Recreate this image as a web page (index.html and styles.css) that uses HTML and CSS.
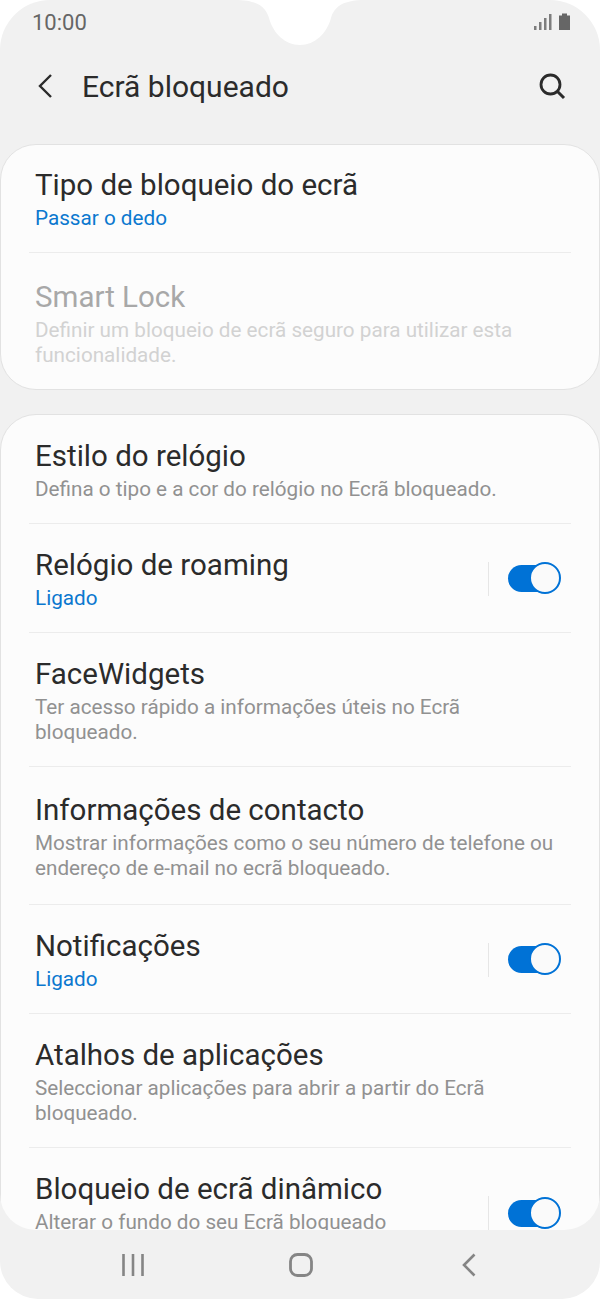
FILE: index.html
```html
<!DOCTYPE html>
<html>
  <head>
    <title>Ecrã bloqueado</title>
    <link rel="stylesheet" href="styles.css">
  </head>
  <body>
    <div class="phone">
      <svg class="notch" width="130" height="46" viewBox="0 0 130 46">
        <path d="M0 0C24 0 31 8 34 18C38 33 50 45 65 45C80 45 92 33 96 18C99 8 106 0 130 0Z" fill="#fff"/>
      </svg>

      <div class="status">
        <span class="clock">10:00</span>
        <svg width="36" height="22" viewBox="0 0 36 22">
          <g fill="#7d7d7d">
            <rect x="0" y="15" width="2.5" height="4"/>
            <rect x="5" y="11" width="2.5" height="8"/>
            <rect x="10" y="7" width="2.5" height="12"/>
            <rect x="15" y="3" width="2.5" height="16"/>
          </g>
          <path d="M25 4.500h3V2.500h5v2h3V19H25Z" fill="#666"/>
        </svg>
      </div>

      <div class="appbar">
        <svg class="back" width="18" height="26" viewBox="0 0 18 26">
          <path d="M15 2L4 13L15 24" fill="none" stroke="#2b2b2b" stroke-width="2.400"/>
        </svg>
        <h1>Ecrã bloqueado</h1>
        <svg class="search" width="28" height="28" viewBox="0 0 28 28">
          <circle cx="12.500" cy="12.500" r="9.500" fill="none" stroke="#2b2b2b" stroke-width="2.800"/>
          <path d="M19.500 19.500L26 26" stroke="#2b2b2b" stroke-width="3"/>
        </svg>
      </div>

      <div class="scroll">
        <div class="card">
          <div class="row first">
            <div class="title">Tipo de bloqueio do ecrã</div>
            <div class="sub blue">Passar o dedo</div>
          </div>
          <div class="row off">
            <div class="title">Smart Lock</div>
            <div class="sub">Definir um bloqueio de ecrã seguro para utilizar esta funcionalidade.</div>
          </div>
        </div>

        <div class="card">
          <div class="row">
            <div class="title">Estilo do relógio</div>
            <div class="sub">Defina o tipo e a cor do relógio no Ecrã bloqueado.</div>
          </div>
          <div class="row has-toggle">
            <div class="text">
              <div class="title">Relógio de roaming</div>
              <div class="sub blue">Ligado</div>
            </div>
            <div class="toggle"><span></span></div>
          </div>
          <div class="row">
            <div class="title">FaceWidgets</div>
            <div class="sub">Ter acesso rápido a informações úteis no Ecrã bloqueado.</div>
          </div>
          <div class="row tall">
            <div class="title">Informações de contacto</div>
            <div class="sub">Mostrar informações como o seu número de telefone ou endereço de e-mail no ecrã bloqueado.</div>
          </div>
          <div class="row has-toggle">
            <div class="text">
              <div class="title">Notificações</div>
              <div class="sub blue">Ligado</div>
            </div>
            <div class="toggle"><span></span></div>
          </div>
          <div class="row">
            <div class="title">Atalhos de aplicações</div>
            <div class="sub">Seleccionar aplicações para abrir a partir do Ecrã bloqueado.</div>
          </div>
          <div class="row has-toggle cut">
            <div class="text">
              <div class="title">Bloqueio de ecrã dinâmico</div>
              <div class="sub">Alterar o fundo do seu Ecrã bloqueado</div>
            </div>
            <div class="toggle"><span></span></div>
          </div>
        </div>
      </div>

      <div class="nav">
        <svg width="24" height="22" viewBox="0 0 24 22">
          <path d="M2.500 0V22M12 0V22M21.500 0V22" stroke="#858585" stroke-width="2.600"/>
        </svg>
        <svg width="24" height="24" viewBox="0 0 24 24">
          <rect x="1.500" y="1.500" width="21" height="21" rx="7" fill="none" stroke="#858585" stroke-width="2.800"/>
        </svg>
        <svg width="14" height="24" viewBox="0 0 14 24">
          <path d="M12.500 1.500L2 12L12.500 22.500" fill="none" stroke="#858585" stroke-width="2.600"/>
        </svg>
      </div>
    </div>
  </body>
</html>
```

FILE: styles.css
```css
body {
  margin: 0;
  background-color: white;
  font-family: 'Roboto', sans-serif;
}
.phone {
  position: relative;
  display: flex;
  flex-direction: column;
  width: 600px;
  height: 1299px;
  background-color: #f1f1f1;
  border-radius: 50px 50px 38px 38px;
  overflow: hidden;
}
.notch {
  position: absolute;
  top: 0;
  left: 235px;
}
.status {
  display: flex;
  justify-content: space-between;
  align-items: center;
  height: 44px;
  padding: 0 30px 0 32px;
}
.clock {
  font-size: 22px;
  color: #666;
}
.appbar {
  display: flex;
  align-items: center;
  height: 84px;
  padding: 0 34px 0 36px;
}
.appbar h1 {
  flex: 1;
  margin: 0 0 0 28px;
  font-size: 30px;
  font-weight: 400;
  color: #2b2b2b;
}
.scroll {
  flex: 1;
  min-height: 0;
  padding-top: 16px;
  border-radius: 0 0 36px 36px;
  overflow: hidden;
}
.card {
  background-color: #fcfcfc;
  border: 1px solid #e2e2e2;
  border-radius: 36px;
  margin-bottom: 24px;
  padding: 0 28px;
}
.row {
  padding: 24px 16px 21px 6px;
  border-bottom: 1px solid #ececec;
}
.row:last-child {
  border-bottom: none;
}
.first {
  padding-top: 23px;
}
.off {
  padding-top: 27px;
  padding-bottom: 21px;
}
.tall {
  padding-top: 26px;
  padding-bottom: 23px;
}
.title {
  font-size: 29.5px;
  line-height: 34px;
  color: #2b2b2b;
}
.sub {
  margin-top: 4px;
  font-size: 20.7px;
  line-height: 25px;
  color: #919191;
}
.blue {
  color: #0b78cf;
}
.off .title {
  color: #a8a8a8;
}
.off .sub {
  color: #d2d2d2;
}
.has-toggle {
  display: flex;
  align-items: center;
}
.text {
  flex: 1;
  align-self: flex-start;
}
.cut {
  min-height: 84px;
}
.toggle {
  display: flex;
  align-items: center;
  height: 34px;
  margin: -2px -5px 0 0;
  padding-left: 19px;
  border-left: 1px solid #e6e6e6;
}
.toggle span {
  display: block;
  position: relative;
  width: 52px;
  height: 27px;
  background-color: #0072d6;
  border-radius: 14px;
}
.toggle span::after {
  content: '';
  position: absolute;
  top: -3px;
  right: -1px;
  width: 28px;
  height: 28px;
  background-color: #fafafa;
  border: 2px solid #0072d6;
  border-radius: 50%;
}
.nav {
  display: grid;
  grid-template-columns: repeat(3, 168px);
  justify-items: center;
  align-items: center;
  height: 69px;
  padding-left: 49px;
}
```
